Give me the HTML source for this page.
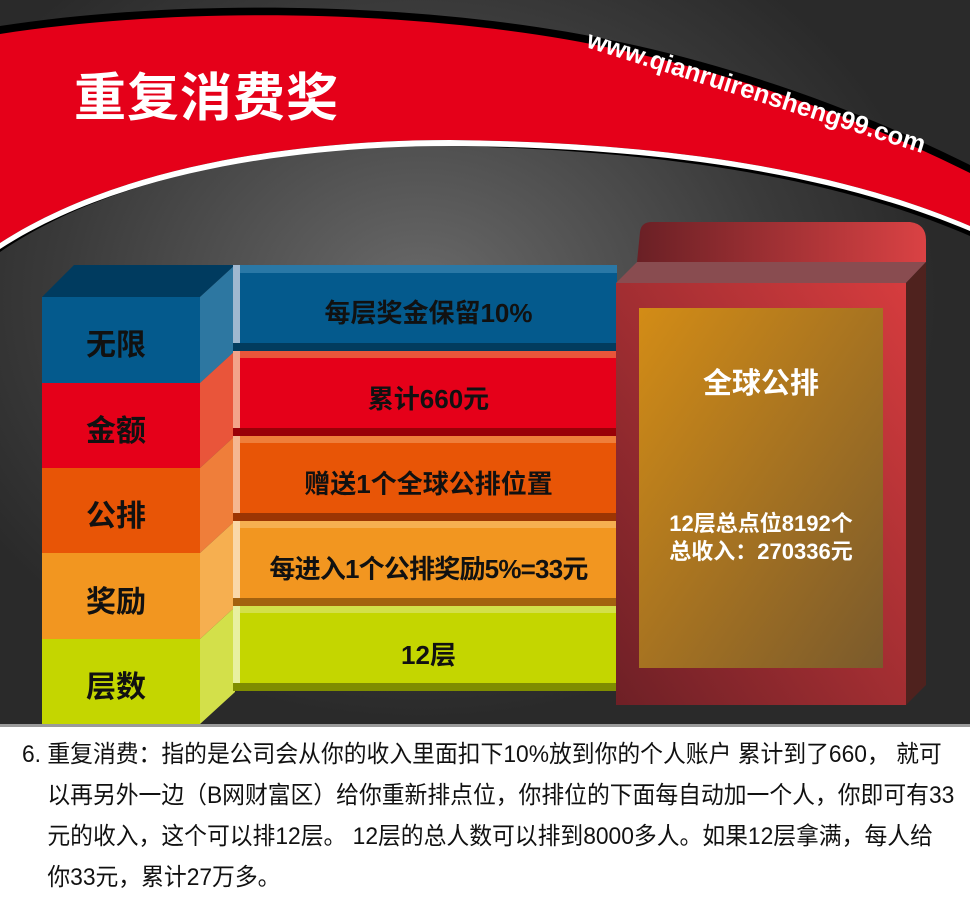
<!DOCTYPE html>
<html><head><meta charset="utf-8"><style>
*{margin:0;padding:0;box-sizing:border-box}
body{width:970px;height:900px;background:#fff;position:relative;overflow:hidden;font-family:"Liberation Sans","Noto Sans CJK SC",sans-serif}
.slide{position:absolute;left:0;top:0;width:970px;height:724px;background:radial-gradient(ellipse 520px 420px at 420px 300px,#6a6a6a 0%,#3a3a3a 70%,#2a2a2a 100%);overflow:hidden}
.abs{position:absolute}
.t{font-weight:bold;color:#111;text-align:center;position:absolute}
.bottom{position:absolute;left:0;top:724px;width:970px;height:176px;background:#fff;border-top:3px solid #9a9a9a}
.para{position:absolute;left:22px;top:734px;font-size:24px;line-height:41px;color:#111;transform:scaleX(.95);transform-origin:left top;width:1000px;white-space:nowrap}
</style></head><body>
<div class="slide">
<svg class="abs" style="left:0;top:0" width="970" height="724">
<path d="M0,26 C200,-5 450,5 620,42 C760,72 880,120 970,165 L970,236 C830,175 650,150 450,146 C300,145 120,170 0,252 Z" fill="#000"/>
<path d="M0,34 C200,3 450,12 620,50 C760,80 880,128 970,173 L970,226 C830,166 650,142 450,140 C300,140 120,165 0,243 Z" fill="#e50019"/>
<path d="M0,243 C120,165 300,140 450,140 C650,142 830,166 970,226 L970,231 C830,172 650,147 450,146 C300,146 120,171 0,249 Z" fill="#fff"/>
<polygon points="42,297 74,265 235,265 200,297" fill="#003b5f"/>
<rect x="42" y="297" width="158" height="86" fill="#045a8d"/>
<rect x="42" y="383" width="158" height="85" fill="#e50019"/>
<rect x="42" y="468" width="158" height="85" fill="#e85506"/>
<rect x="42" y="553" width="158" height="86" fill="#f29620"/>
<rect x="42" y="639" width="158" height="85" fill="#c4d600"/>
<polygon points="200,297 235,265 235,351 200,383" fill="#2d77a1"/>
<polygon points="200,383 235,351 235,436 200,468" fill="#e9553a"/>
<polygon points="200,468 235,436 235,521 200,553" fill="#ef7e3a"/>
<polygon points="200,553 235,521 235,607 200,639" fill="#f6af50"/>
<polygon points="200,639 235,607 235,692 200,724" fill="#d3e04a"/>
<g>
<rect x="233" y="265" width="384" height="8" fill="#2a78a6"/><rect x="233" y="273" width="384" height="70" fill="#045a8d"/><rect x="233" y="343" width="384" height="8" fill="#023c5e"/><rect x="233" y="265" width="7" height="78" fill="#9fb8d0"/>
<rect x="233" y="351" width="384" height="7" fill="#e9553a"/><rect x="233" y="358" width="384" height="70" fill="#e50019"/><rect x="233" y="428" width="384" height="8" fill="#990008"/><rect x="233" y="351" width="7" height="77" fill="#f3a38a"/>
<rect x="233" y="436" width="384" height="7" fill="#ef7e3a"/><rect x="233" y="443" width="384" height="70" fill="#e85506"/><rect x="233" y="513" width="384" height="8" fill="#9c3503"/><rect x="233" y="436" width="7" height="77" fill="#f5b790"/>
<rect x="233" y="521" width="384" height="7" fill="#f6af50"/><rect x="233" y="528" width="384" height="70" fill="#f29620"/><rect x="233" y="598" width="384" height="8" fill="#a3620f"/><rect x="233" y="521" width="7" height="77" fill="#fad8a8"/>
<rect x="233" y="606" width="384" height="7" fill="#d3e04a"/><rect x="233" y="613" width="384" height="70" fill="#c4d600"/><rect x="233" y="683" width="384" height="8" fill="#7f8d00"/><rect x="233" y="606" width="7" height="77" fill="#e8f0a0"/>
</g>
<defs>
<linearGradient id="tab" x1="0" x2="1"><stop offset="0" stop-color="#6a2025"/><stop offset="1" stop-color="#da4244"/></linearGradient>
<linearGradient id="front" x1="0" y1="1" x2="1" y2="0"><stop offset="0" stop-color="#6e2026"/><stop offset="1" stop-color="#d63c3e"/></linearGradient>
<linearGradient id="panel" x1="0" y1="0" x2="1" y2="1"><stop offset="0" stop-color="#d38c16"/><stop offset="1" stop-color="#7a5a2c"/></linearGradient>
</defs>
<path d="M637,262 L640,232 Q641,222 652,222 L910,222 Q926,224 926,240 L926,262 Z" fill="url(#tab)"/>
<polygon points="616,283 637,262 926,262 906,283" fill="#894c50"/>
<polygon points="906,283 926,262 926,685 906,705" fill="#4f221e"/>
<rect x="616" y="283" width="290" height="422" fill="url(#front)"/>
<rect x="639" y="308" width="244" height="360" fill="url(#panel)"/>
</svg>
<div class="abs" style="left:74px;top:56px;font-size:52px;font-weight:bold;color:#fff;letter-spacing:1px">重复消费奖</div>
<div class="abs" style="left:592px;top:26px;font-size:25.5px;font-weight:bold;color:#fff;transform:rotate(17.5deg);transform-origin:left top;white-space:nowrap">www.qianruirensheng99.com</div>
<div class="t" style="left:42px;width:148px;top:320px;font-size:30px">无限</div>
<div class="t" style="left:42px;width:148px;top:406px;font-size:30px">金额</div>
<div class="t" style="left:42px;width:148px;top:491px;font-size:30px">公排</div>
<div class="t" style="left:42px;width:148px;top:577px;font-size:30px">奖励</div>
<div class="t" style="left:42px;width:148px;top:662px;font-size:30px">层数</div>
<div class="t" style="left:240px;width:377px;top:293px;font-size:26px">每层奖金保留10%</div>
<div class="t" style="left:240px;width:377px;top:379px;font-size:26px">累计660元</div>
<div class="t" style="left:240px;width:377px;top:464px;font-size:26px">赠送1个全球公排位置</div>
<div class="t" style="left:236px;width:385px;top:549px;font-size:26px;white-space:nowrap;letter-spacing:-0.8px">每进入1个公排奖励5%=33元</div>
<div class="t" style="left:240px;width:377px;top:635px;font-size:26px">12层</div>
<div class="t" style="left:639px;width:244px;top:360px;font-size:29px;color:#fff">全球公排</div>
<div class="t" style="left:639px;width:244px;top:510px;font-size:22px;color:#fff;line-height:28px">12层总点位8192个<br>总收入：270336元</div>
</div>
<div class="bottom"></div>
<div class="para">6. 重复消费：指的是公司会从你的收入里面扣下10%放到你的个人账户 累计到了660， 就可<br>&nbsp;&nbsp;&nbsp;&nbsp;以再另外一边（B网财富区）给你重新排点位，你排位的下面每自动加一个人，你即可有33<br>&nbsp;&nbsp;&nbsp;&nbsp;元的收入，这个可以排12层。 12层的总人数可以排到8000多人。如果12层拿满，每人给<br>&nbsp;&nbsp;&nbsp;&nbsp;你33元，累计27万多。</div>
</body></html>
